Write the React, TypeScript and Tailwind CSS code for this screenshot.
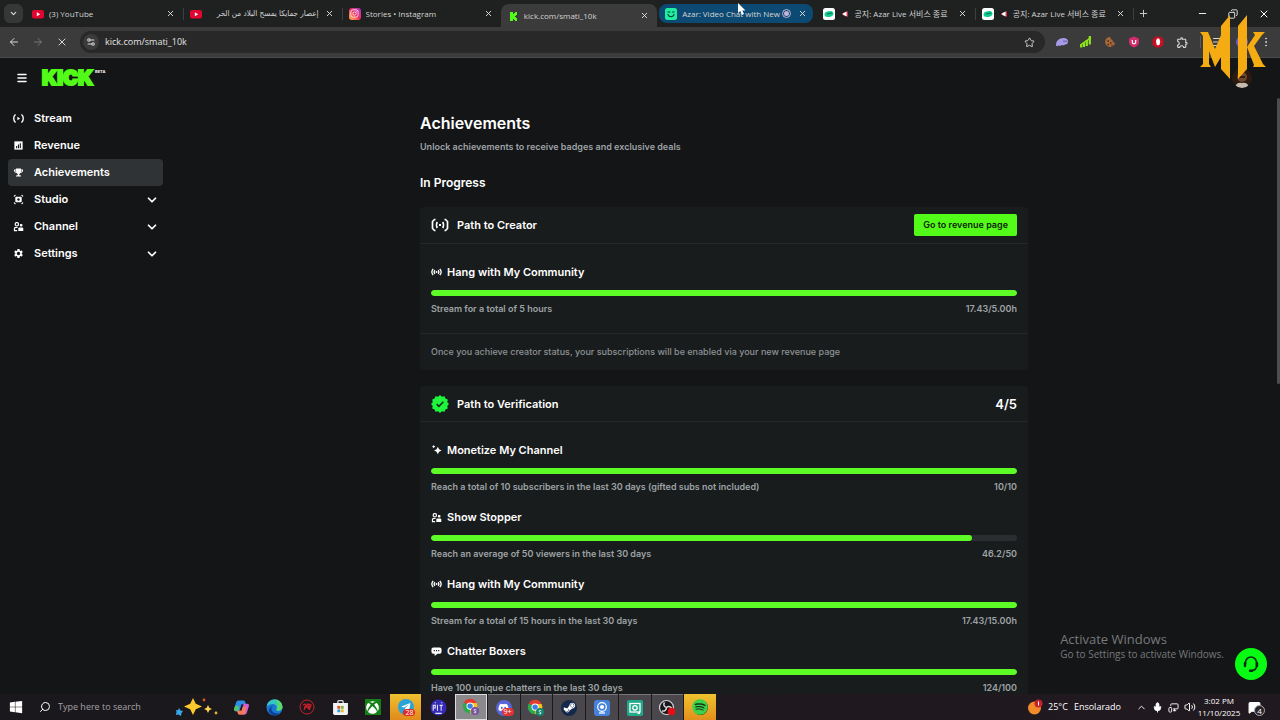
import type { ReactNode } from "react";
import {
  ArrowLeft,
  ArrowRight,
  ChevronDown,
  ChevronUp,
  Copy,
  ListMusic,
  Menu,
  MessageSquareText,
  Mic,
  Minus,
  MonitorSmartphone,
  MoreVertical,
  Plus,
  Search,
  Settings2,
  Star,
  Volume2,
  X,
} from "lucide-react";
import { FaDiscord, FaInstagram, FaSpotify, FaSteamSymbol, FaTelegramPlane, FaTrophy, FaWindows, FaXbox } from "react-icons/fa";
import { MdOutlineExtension, MdSettings } from "react-icons/md";

type Tab = {
  title: string;
  icon: ReactNode;
  state?: "active" | "recording";
  rtl?: boolean;
  horn?: boolean;
  divider?: boolean;
};

type Goal = {
  title: string;
  icon: ReactNode;
  caption: string;
  value: string;
  percent: number;
};

/* ---------- small drawings ---------- */

const YoutubeIcon = () => (
  <svg viewBox="0 0 12 12" className="size-3 shrink-0">
    <rect x="0" y="2" width="12" height="8.4" rx="2" fill="#e0062f" />
    <path d="M4.8 4.2v4l3.4-2z" fill="#fff" />
  </svg>
);

const InstagramIcon = () => (
  <span className="flex size-3 shrink-0 items-center justify-center rounded-[3px] bg-linear-to-tr from-[#fdb43c] via-[#f0255f] to-[#a02bd0] text-white">
    <FaInstagram size={9} />
  </span>
);

const KickIcon = () => (
  <svg viewBox="0 0 12 12" className="size-3 shrink-0" fill="#53fc18">
    <path d="M3 2h3v2h1V3h1V2h2v3H9v1H8v1h1v1h1v3H8v-1H7V9H6v2H3z" />
  </svg>
);

const AzarIcon = () => (
  <svg viewBox="0 0 12 12" className="size-3 shrink-0">
    <rect width="12" height="12" rx="2.5" fill="#1ff0a0" />
    <path d="M3 4h2M7.5 4H9M3 6.5c1 3 5 3 6 0" fill="none" stroke="#0b3b38" strokeWidth="1.2" strokeLinecap="round" />
  </svg>
);

const AzarNoticeIcon = () => (
  <svg viewBox="0 0 12 12" className="size-3 shrink-0">
    <rect width="12" height="12" rx="2.5" fill="#fff" />
    <path d="M1.5 6.5C2 3 5 3.500 7 3c2-.3 3.500.6 3.500 2.500S9 8.500 6.500 9C4 9 1.500 9 1.500 6.500z" fill="#13c98e" />
    <path d="M4 6l5-1" stroke="#0a6d60" strokeWidth="1" />
  </svg>
);

const HornIcon = () => (
  <svg viewBox="0 0 10 10" className="size-2 shrink-0">
    <path d="M1 4l5-2v6L1 6z" fill="#fff" />
    <path d="M6 2l1.500-.5v7L6 8zM0 4h1.500v2.300H0z" fill="#d92638" />
  </svg>
);

const BroadcastIcon = ({ className }: { className: string }) => (
  <svg viewBox="0 0 16 12" className={className} fill="none" stroke="currentColor" strokeWidth="2">
    <circle cx="8" cy="6" r="1.500" fill="currentColor" stroke="none" />
    <path d="M5.500 3.200c-1.200 1.600-1.200 4 0 5.600M10.500 3.200c1.200 1.600 1.200 4 0 5.600M3 1.200c-2.300 2.800-2.300 6.800 0 9.600M13 1.200c2.300 2.800 2.300 6.800 0 9.600" />
  </svg>
);

const CreatorIcon = () => (
  <svg viewBox="0 0 18 14" className="h-[14px] w-[18px] text-white" fill="none" stroke="currentColor" strokeWidth="1.700">
    <rect x="8" y="6" width="2" height="2" fill="currentColor" stroke="none" />
    <path d="M4.500 1.500H3.500L1.500 3.500v7l2 2h1M13.500 1.500h1l2 2v7l-2 2h-1M6.300 4c-1 1.500-1 4.500 0 6M11.700 4c1 1.500 1 4.500 0 6" />
  </svg>
);

const StreamIcon = () => (
  <svg viewBox="0 0 12 12" className="size-[11px]" fill="none" stroke="currentColor" strokeWidth="1.500">
    <path d="M3 2H2.500Q.8 3.500.8 6T2.500 10H3M9 2h.5q1.700 1.500 1.700 4T9.500 10H9" />
    <path d="M4.800 4v4l3-2z" fill="currentColor" stroke="none" />
  </svg>
);

const RevenueIcon = () => (
  <svg viewBox="0 0 12 12" className="size-[11px]">
    <rect x="1.500" y="1.500" width="9" height="9" fill="currentColor" />
    <path d="M4 9V6.500M6 9V5M8 9V3.500" stroke="#141517" strokeWidth="1.200" />
  </svg>
);

const StudioIcon = () => (
  <svg viewBox="0 0 12 12" className="size-[11px]">
    <path d="M1.500 3v-1.500h1.500M9 1.500h1.500v1.500M10.500 9v1.500H9M3 10.500H1.500V9" fill="none" stroke="currentColor" strokeWidth="1" />
    <rect x="2.500" y="3" width="7" height="6" rx="1" fill="currentColor" />
    <circle cx="6" cy="6" r="1.300" fill="#141517" />
  </svg>
);

const PeopleIcon = () => (
  <svg viewBox="0 0 12 12" className="size-[11px]">
    <rect x="2.500" y="1.800" width="3.400" height="3.400" rx="1.200" fill="none" stroke="currentColor" strokeWidth="1.300" />
    <path d="M1.600 10.500V8.200q0-1.200 1.400-1.200h2M1 10.400h3.500" fill="none" stroke="currentColor" strokeWidth="1.300" />
    <rect x="7.500" y="3.200" width="2.800" height="2.800" rx="1" fill="currentColor" />
    <path d="M5.800 11V8.200q0-1.200 1.200-1.200h3q1.200 0 1.200 1.200V11z" fill="currentColor" />
  </svg>
);

const SparkIcon = () => (
  <svg viewBox="0 0 12 12" className="size-[10px]" fill="currentColor">
    <path d="M7 2l1.500 3L11.500 6.500 8.500 8 7 11 5.500 8 2.500 6.500l3-1.500z" />
    <path d="M2 0l.8 1.200L4 2l-1.200.8L2 4l-.8-1.200L0 2l1.200-.8z" />
  </svg>
);

const ChatIcon = () => (
  <svg viewBox="0 0 12 12" className="size-[11px]">
    <path d="M2.500 1.500h7Q11.500 1.500 11.500 3.500v3q0 2-2 2H7L4 11V8.500H2.500q-2 0-2-2v-3q0-2 2-2z" fill="currentColor" />
    <path d="M3 5h1.200M5.400 5h1.200M7.800 5H9" stroke="#191b1c" strokeWidth="1.200" />
  </svg>
);

const VerifiedIcon = () => (
  <svg viewBox="0 0 24 24" className="size-[18px]">
    <path
      d="M12 0l2.500 2.300L18 1.600l1.200 3.200L22.400 6l-.7 3.500L24 12l-2.300 2.500.7 3.500-3.200 1.200L18 22.400l-3.500-.7L12 24l-2.500-2.300-3.500.7-1.200-3.200L1.600 18l.7-3.500L0 12l2.300-2.500L1.600 6l3.200-1.200L6 1.600l3.500.7z"
      fill="#1ff53f"
    />
    <path d="M7.500 12.200l3 2.800 6-6" fill="none" stroke="#12321a" strokeWidth="2.200" />
  </svg>
);

const HeadsetIcon = () => (
  <svg viewBox="0 0 18 18" className="size-[18px]" fill="none" stroke="currentColor">
    <path d="M3.500 9V7.500a5.500 5.500 0 0111 0V11q0 4-4.500 4.500" strokeWidth="1.700" />
    <path d="M3 8v3M15 8v3" strokeWidth="2.400" strokeLinecap="round" />
    <path d="M8 15.700h2.200" strokeWidth="2.400" strokeLinecap="round" />
  </svg>
);

const ChromeIcon = ({ badge }: { badge: "purple" | "green" }) => (
  <svg viewBox="0 0 20 20" className="size-[18px]">
    <path d="M9 9L2 5a8 8 0 0114 0z" fill="#e33b2e" />
    <path d="M9 9h7.800A8 8 0 019 17z" fill="#fbc116" />
    <path d="M9 9l0 8A8 8 0 012 5z" fill="#2da94f" />
    <path d="M9 5.500h7.200A8 8 0 0110 17l2.500-6z" fill="#fbc116" />
    <circle cx="9" cy="9" r="4" fill="#fff" />
    <circle cx="9" cy="9" r="3" fill="#3e7fe8" />
    <circle cx="14.500" cy="14.500" r="4.500" fill={badge === "purple" ? "#74529f" : "#10866a"} />
    <path d="M16 13.200q-1.500-1-2.500-.2-.8 1 .8 1.500 2 .5 1.200 1.700-1 .8-2.500-.2" fill="none" stroke="#e8e3f5" strokeWidth="1" />
  </svg>
);

const CopilotIcon = () => (
  <svg viewBox="0 0 16 16" className="size-[17px]">
    <path d="M5 1.500h5q1 0 1.400 1.200L12 5H8L6 11.500H2.500Q.5 11.500 1 9.500L3 3q.5-1.500 2-1.500z" fill="#2a8fe6" />
    <path d="M1 9.500L2 6l4 1-1 4.500H2.500Q.6 11.500 1 9.500z" fill="#54c36a" />
    <path d="M11 14.500H6q-1 0-1.400-1.200L4 11h4l2-6.500h3.500q2 0 1.500 2L13 13q-.5 1.500-2 1.500z" fill="#d45bd0" />
    <path d="M4.600 13.300L4 11h4.200l1-3.500h3.300L11 14.500H6q-1 0-1.400-1.200z" fill="#f57a55" />
  </svg>
);

const EdgeIcon = () => (
  <svg viewBox="0 0 16 16" className="size-[17px]">
    <circle cx="8" cy="8" r="7.500" fill="#1979d2" />
    <path d="M.5 8A7.500 7.500 0 0115.500 7.500c0 2.500-2 3.500-4 3.500-1.500 0-2.200-.5-1.500-1.300C11 7 9 4.800 6.500 4.800 3.500 4.800 1 6 .5 8z" fill="#35c6c4" />
    <path d="M9 .7c4 .4 6.500 3.500 6.500 6.800 0 2.500-2 3.500-4 3.500-1.500 0-2-.5-1.500-1.300C11.500 6 11 3 9 .7z" fill="#5bd86a" />
    <path d="M5 9c.2 3.500 3.500 5.500 8 4-2.500 3-7 3-9.500 0C2 11 3 7 7 6.500 5.500 7 5 8 5 9z" fill="#0c3f95" />
  </svg>
);

const StoreIcon = () => (
  <svg viewBox="0 0 16 16" className="size-[17px]">
    <path d="M5.500 4V2.500q0-1 1-1h3q1 0 1 1V4" fill="none" stroke="#d8dde0" strokeWidth="1.200" />
    <path d="M1 3.800h14v9.700q0 1.500-1.500 1.500h-11Q1 15 1 13.500z" fill="#f1f3f4" />
    <path d="M5 6.500h2.700v2.700H5z" fill="#e8502f" />
    <path d="M8.300 6.500H11v2.700H8.300z" fill="#7db72f" />
    <path d="M5 9.800h2.700v2.700H5z" fill="#2b9fe6" />
    <path d="M8.300 9.800H11v2.700H8.300z" fill="#f3b61f" />
  </svg>
);

const ObsIcon = () => (
  <svg viewBox="0 0 18 18" className="size-[18px]">
    <circle cx="8.500" cy="8.500" r="7" fill="#17171a" stroke="#d5d5d8" strokeWidth="1.200" />
    <path d="M8.500 8.500C6 8 5 5.500 6.500 3.500M8.500 8.500c2-1.500 4.500-1 5.500 1M8.500 8.500c0 2.500-2 4-4.500 3.500" fill="none" stroke="#d5d5d8" strokeWidth="1.500" />
    <circle cx="13.500" cy="12.500" r="3.800" fill="#e80c14" />
  </svg>
);

const SparklesWidget = () => (
  <svg viewBox="0 0 42 18" className="h-[18px] w-[42px] shrink-0">
    <path d="M17 0l2.800 5.700L26 8.500l-6.200 2.800L17 17l-2.800-5.700L8 8.500l6.200-2.800z" fill="#fdc92c" />
    <path d="M32 7l1.300 2.700L36 11l-2.700 1.300L32 15l-1.300-2.700L28 11l2.700-1.300z" fill="#fbd34f" />
    <path d="M3 10l1.500 2.500L7 13l-1.500 2L5 18l-2.500-1.500L0 17l.5-3L0 12l2 .3z" fill="#38a7ec" />
    <circle cx="28" cy="2" r="1.400" fill="#d9572e" />
    <circle cx="40" cy="15" r="1.400" fill="#e0b33a" />
  </svg>
);

const Emblem = () => (
  <svg viewBox="0 0 66 66" className="pointer-events-none absolute top-[15px] right-[14px] z-20 size-[66px]" fill="#f5ab12">
    <path d="M21 11l9-11v64l-9-10z" />
    <path d="M38 11l9-11v54l-9 10z" />
    <path d="M0 17h8l7 17 6-14v22l-6 10-6-16v13l2 3H0l3-3V21z" />
    <path d="M47 32l8-12-2-3h12l-3 3-8 11 9 18 3 3H53l1-2z" />
  </svg>
);

/* ---------- data ---------- */

const tabs: Tab[] = [
  { title: "(3) YouTube", icon: <YoutubeIcon />, divider: true },
  { title: "إعصار جمايكا يمسح البلاد من الخر", icon: <YoutubeIcon />, rtl: true, divider: true },
  { title: "Stories • Instagram", icon: <InstagramIcon /> },
  { title: "kick.com/smati_10k", icon: <KickIcon />, state: "active" },
  { title: "Azar: Video Chat with New", icon: <AzarIcon />, state: "recording" },
  { title: "공지: Azar Live 서비스 종료", icon: <AzarNoticeIcon />, horn: true, divider: true },
  { title: "공지: Azar Live 서비스 종료", icon: <AzarNoticeIcon />, horn: true, divider: true },
];

const navItems = [
  { label: "Stream", icon: <StreamIcon /> },
  { label: "Revenue", icon: <RevenueIcon /> },
  { label: "Achievements", icon: <FaTrophy size={9} />, active: true },
  { label: "Studio", icon: <StudioIcon />, nested: true },
  { label: "Channel", icon: <PeopleIcon />, nested: true },
  { label: "Settings", icon: <MdSettings size={11} />, nested: true },
];

const creatorGoals: Goal[] = [
  {
    title: "Hang with My Community",
    icon: <BroadcastIcon className="h-2 w-[11px]" />,
    caption: "Stream for a total of 5 hours",
    value: "17.43/5.00h",
    percent: 100,
  },
];

const verificationGoals: Goal[] = [
  {
    title: "Monetize My Channel",
    icon: <SparkIcon />,
    caption: "Reach a total of 10 subscribers in the last 30 days (gifted subs not included)",
    value: "10/10",
    percent: 100,
  },
  {
    title: "Show Stopper",
    icon: <PeopleIcon />,
    caption: "Reach an average of 50 viewers in the last 30 days",
    value: "46.2/50",
    percent: 92.4,
  },
  {
    title: "Hang with My Community",
    icon: <BroadcastIcon className="h-2 w-[11px]" />,
    caption: "Stream for a total of 15 hours in the last 30 days",
    value: "17.43/15.00h",
    percent: 100,
  },
  {
    title: "Chatter Boxers",
    icon: <ChatIcon />,
    caption: "Have 100 unique chatters in the last 30 days",
    value: "124/100",
    percent: 100,
  },
];

/* ---------- browser ---------- */

function BrowserTab({ tab }: { tab: Tab }) {
  const look =
    tab.state === "active"
      ? "h-[23px] rounded-t-lg bg-[#3b3b3b] mr-0.5 pr-2"
      : tab.state === "recording"
        ? "h-[19px] rounded-lg bg-[#0c4a73] mr-1 pr-1.5"
        : "h-[19px] pr-2";
  return (
    <div className="flex h-[27px] min-w-0 pt-1">
      <div className={`flex min-w-0 flex-1 items-center pl-1.5 ${look}`}>
        {tab.icon}
        {tab.horn && (
          <span className="ml-[7px] flex">
            <HornIcon />
          </span>
        )}
        <button
          dir={tab.rtl ? "rtl" : "ltr"}
          className={`min-w-0 flex-1 overflow-hidden text-start text-[8px] leading-4 whitespace-nowrap text-[#d4d4d4] ${
            tab.horn ? "ml-1" : "ml-[5px]"
          } ${tab.rtl ? "mr-1.5 font-['DejaVu_Sans_Condensed','DejaVu_Sans',sans-serif]" : ""}`}
        >
          {tab.title}
        </button>
        {tab.state === "recording" && (
          <span className="mr-[7px] flex size-[9px] shrink-0 items-center justify-center rounded-full border border-[#c3b4d8]">
            <span className="size-[5px] rounded-full bg-[#c3b4d8]" />
          </span>
        )}
        <button aria-label="Close tab" className="text-[#dedede]">
          <X size={9} strokeWidth={2.5} />
        </button>
      </div>
      {tab.divider && <span className="mt-1 h-3 w-px bg-[#3d3f40]" />}
    </div>
  );
}

function TabStrip() {
  return (
    <div className="flex h-[27px] items-center bg-[#1f2121]">
      <button
        aria-label="Search tabs"
        className="mr-[3px] ml-1 flex size-[19px] items-center justify-center rounded-md bg-[#363737] text-[#dedede]"
      >
        <ChevronDown size={9} strokeWidth={3} />
      </button>
      <div className="grid max-w-[1108px] flex-1 grid-cols-7">
        {tabs.map((tab, i) => (
          <BrowserTab key={i} tab={tab} />
        ))}
      </div>
      <button aria-label="New tab" className="ml-1 text-[#d4d4d4]">
        <Plus size={11} />
      </button>
      <div className="ml-auto flex items-center gap-5 pr-2.5 text-white">
        <button aria-label="Minimize">
          <Minus size={11} strokeWidth={2} />
        </button>
        <button aria-label="Restore">
          <Copy size={10} strokeWidth={2} className="-scale-x-100" />
        </button>
        <button aria-label="Close">
          <X size={12} strokeWidth={2} />
        </button>
      </div>
    </div>
  );
}

function Toolbar() {
  return (
    <div className="flex h-[31px] items-center border-b border-[#4a4a4a] bg-[#3b3b3b] text-[#d8d8d8]">
      <div className="flex items-center gap-3 pl-2">
        <button aria-label="Back">
          <ArrowLeft size={12} />
        </button>
        <button aria-label="Forward" className="text-[#777]">
          <ArrowRight size={12} />
        </button>
        <button aria-label="Stop loading">
          <X size={12} />
        </button>
      </div>
      <div className="ml-3 flex h-[22px] flex-1 items-center rounded-full bg-[#282828] pr-2.5 pl-[3px]">
        <button aria-label="Site information" className="flex size-4 items-center justify-center rounded-full bg-[#3b3b3b]">
          <Settings2 size={10} strokeWidth={2.5} />
        </button>
        <input
          aria-label="Address"
          defaultValue="kick.com/smati_10k"
          className="ml-1.5 min-w-0 flex-1 bg-transparent text-[9px] leading-4 text-[#e3e3e3] outline-none"
        />
        <button aria-label="Bookmark this page">
          <Star size={11} />
        </button>
      </div>
      <div className="flex items-center gap-3 pr-2 pl-[11px]">
        <button aria-label="Phantom">
          <svg viewBox="0 0 12 12" className="size-3">
            <path d="M0 9c0-4 3-7 7.500-7C10.500 2 12 3.500 12 5.500S10.500 9 9 8.500C7.500 10 6 9 5.500 9 4.500 10.500 3 9.500 2.500 9.500 1.500 10.500 0 10.500 0 9z" fill="#a79ae9" />
            <path d="M8 4.500v1.500M10 4.500V6" stroke="#4b4084" strokeWidth="1" />
          </svg>
        </button>
        <button aria-label="Stats">
          <svg viewBox="0 0 12 12" className="size-3" fill="none" stroke="#8fe51c" strokeWidth="2.200">
            <path d="M1.200 8.500v3M4 6.500V11M6.800 4v6M9.800 0v8.500" />
            <path d="M0 9.500L11 1.500" strokeWidth="1.500" />
          </svg>
        </button>
        <button aria-label="Cookies">
          <svg viewBox="0 0 12 12" className="size-3">
            <path d="M6.500 1a5 5 0 104.500 6L9 6l-.5-2L6.500 3z" fill="#a7673b" />
            <path d="M3.500 5h1.500M6 7h1.500M3.500 8.500H5M7.500 9.500h1" stroke="#472617" strokeWidth="1.300" />
          </svg>
        </button>
        <button aria-label="Shield">
          <svg viewBox="0 0 12 12" className="size-3">
            <path d="M6 .5l5 2v4Q10.500 10 6 11.500 1.500 10 1 6.500v-4z" fill="#d12c6c" />
            <path d="M4.300 4v2.300q0 1.500 1.700 1.500t1.700-1.500V4" fill="none" stroke="#fff" strokeWidth="1.200" />
          </svg>
        </button>
        <button aria-label="Ad blocker">
          <svg viewBox="0 0 12 12" className="size-3">
            <path d="M3.500.5h5l3 3v5l-3 3h-5l-3-3v-5z" fill="#c50f24" />
            <path d="M4 5l.8-2L6 2.200 7.500 3l.7 2.500-.5 3-1.700 1-1.500-1z" fill="#fff" />
          </svg>
        </button>
        <button aria-label="Extensions">
          <MdOutlineExtension size={13} />
        </button>
        <span className="-mx-px h-3 w-px bg-[#585858]" />
        <button aria-label="Media controls">
          <ListMusic size={12} />
        </button>
        <button aria-label="Profile" className="size-3 rounded-full bg-[#7a5cc0] text-[9px] leading-3 text-white">
          S
        </button>
        <button aria-label="Browser menu">
          <MoreVertical size={12} strokeWidth={2} />
        </button>
      </div>
    </div>
  );
}

/* ---------- page ---------- */

function SiteHeader() {
  return (
    <header className="flex h-10 shrink-0 items-center pr-7 pl-4">
      <button aria-label="Toggle menu" className="text-white">
        <Menu size={12} strokeWidth={3} />
      </button>
      <a href="#" aria-label="Kick home" className="ml-3 flex text-[#53fc18]">
        <svg viewBox="0 0 68 24" className="h-6 w-[68px]">
          <text
            x="2"
            y="19"
            fill="currentColor"
            stroke="currentColor"
            strokeWidth="2"
            strokeLinejoin="miter"
            fontFamily="Inter, sans-serif"
            fontWeight="900"
            fontSize="20"
          >
            KICK
          </text>
          <text x="55" y="7" fill="#fff" fontFamily="Inter, sans-serif" fontWeight="700" fontSize="4">
            BETA
          </text>
        </svg>
      </a>
      <button aria-label="Account" className="ml-auto size-5 overflow-hidden rounded-full">
        <svg viewBox="0 0 20 20">
          <rect width="20" height="20" fill="#2b1a10" />
          <circle cx="10" cy="9" r="5" fill="#70452c" />
          <path d="M3 20q1-6 7-5 6-1 7 5z" fill="#c6bdb0" />
          <path d="M7 9h6" stroke="#1a0f0a" strokeWidth="1.500" />
        </svg>
      </button>
    </header>
  );
}

function Sidebar() {
  return (
    <nav className="w-[171px] shrink-0 px-2 pt-[7px]">
      {navItems.map((item) => (
        <a
          key={item.label}
          href="#"
          className={`flex h-[27px] items-center rounded-sm pr-1 pl-[5px] text-[11px] font-semibold text-white ${
            item.active ? "bg-[#303335]" : ""
          }`}
        >
          <span className="mr-2.5 flex w-[11px] justify-center">{item.icon}</span>
          {item.label}
          {item.nested && <ChevronDown size={14} strokeWidth={3} className="ml-auto" />}
        </a>
      ))}
    </nav>
  );
}

function GoalRow({ goal }: { goal: Goal }) {
  return (
    <div>
      <h4 className="flex items-center gap-[5px] text-[11px] leading-4 font-semibold text-white">
        <span className="flex w-[11px] justify-center">{goal.icon}</span>
        {goal.title}
      </h4>
      <div
        role="progressbar"
        aria-label={goal.title}
        aria-valuenow={goal.percent}
        className="mt-2.5 h-1.5 overflow-hidden rounded-full bg-[#2b2e31]"
      >
        <div className="h-full rounded-full bg-[#5dfc26]" style={{ width: `${goal.percent}%` }} />
      </div>
      <div className="mt-[5px] flex justify-between text-[9px] leading-4 font-semibold text-[#9ea3a6]">
        <span>{goal.caption}</span>
        <span>{goal.value}</span>
      </div>
    </div>
  );
}

function AchievementCard({
  icon,
  title,
  aside,
  goals,
  footer,
}: {
  icon: ReactNode;
  title: string;
  aside: ReactNode;
  goals: Goal[];
  footer?: string;
}) {
  return (
    <section className="mt-4 rounded-sm bg-[#191c1d]">
      <div className="flex min-h-9 items-center border-b border-[#24282a] px-[11px]">
        <span className="mr-2 flex w-[18px] justify-center">{icon}</span>
        <h3 className="text-[11px] leading-4 font-semibold text-white">{title}</h3>
        <div className="ml-auto">{aside}</div>
      </div>
      <div className="flex flex-col gap-3.5 px-[11px] pt-5 pb-4">
        {goals.map((goal, i) => (
          <GoalRow key={i} goal={goal} />
        ))}
      </div>
      {footer && (
        <p className="border-t border-[#24282a] px-[11px] py-2.5 text-[9px] leading-4 font-medium text-[#8d9295]">
          {footer}
        </p>
      )}
    </section>
  );
}

function Achievements() {
  return (
    <main className="relative min-w-0 flex-1 overflow-hidden pr-[3px]">
      <div className="mx-auto max-w-[608px] pt-[15px]">
        <h1 className="text-base leading-5 font-semibold text-white">Achievements</h1>
        <p className="mt-1.5 text-[9px] leading-4 font-semibold text-[#9ea3a6]">
          Unlock achievements to receive badges and exclusive deals
        </p>
        <h2 className="mt-5 text-xs leading-4 font-semibold text-white">In Progress</h2>
        <AchievementCard
          icon={<CreatorIcon />}
          title="Path to Creator"
          aside={
            <button className="my-[7px] flex h-[22px] items-center rounded-xs bg-[#53fc18] px-[9px] text-[9px] leading-4 font-semibold text-[#10250a]">
              Go to revenue page
            </button>
          }
          goals={creatorGoals}
          footer="Once you achieve creator status, your subscriptions will be enabled via your new revenue page"
        />
        <AchievementCard
          icon={<VerifiedIcon />}
          title="Path to Verification"
          aside={<span className="block text-[13px] leading-4 font-semibold text-white">4/5</span>}
          goals={verificationGoals}
        />
      </div>
      {/* Scrollbar */}
      <div className="absolute top-0 right-0 h-[286px] w-[3px] rounded-full bg-[#4b4e50]" />
    </main>
  );
}

/* ---------- taskbar ---------- */

const taskCell = "flex h-[26px] items-center justify-center";
const openCell = "flex h-[26px] items-center justify-center bg-[#49474c] border-t border-[#77757a]";

function Taskbar() {
  return (
    <footer className="flex h-[26px] shrink-0 items-center bg-linear-to-r from-[#1a181c] to-[#211920] text-white">
      <button aria-label="Start" className="ml-[9px]">
        <FaWindows size={14} />
      </button>
      <label className="ml-4 flex items-center">
        <Search size={12} className="-scale-x-100" />
        <input
          placeholder="Type here to search"
          aria-label="Type here to search"
          className="ml-[7px] w-[118px] bg-transparent text-[9px] leading-4 outline-none placeholder:text-[#a5a2a5]"
        />
      </label>
      <SparklesWidget />
      <div className="ml-2 grid w-[490px] shrink-0 grid-cols-15 gap-px">
        <button aria-label="Copilot" className={taskCell}>
          <CopilotIcon />
        </button>
        <button aria-label="Edge" className={taskCell}>
          <EdgeIcon />
        </button>
        <button aria-label="Game launcher" className={taskCell}>
          <svg viewBox="0 0 16 16" className="size-4" fill="none" stroke="#c91f2b">
            <circle cx="8" cy="8" r="7" strokeWidth="1" />
            <path d="M4 6l2-1 1 2-2 4M7 7l2-2 1 2-1 3M10 5l2 1-1 3-1 2M5 8h6" strokeWidth="1.300" />
          </svg>
        </button>
        <button aria-label="Store" className={taskCell}>
          <StoreIcon />
        </button>
        <button aria-label="Xbox" className={taskCell}>
          <span className="flex size-4 items-center justify-center bg-[#138016]">
            <FaXbox size={13} />
          </span>
        </button>
        <button aria-label="Telegram" className="relative flex h-[26px] items-center justify-center bg-linear-to-b from-[#eec12f] to-[#e08a1c]">
          <span className="flex size-4 items-center justify-center rounded-full bg-[#2ba3d8]">
            <FaTelegramPlane size={10} />
          </span>
          <span className="absolute right-1.5 bottom-1 rounded-full bg-[#dd2a22] px-0.5 text-[7px] leading-[7px]">28</span>
        </button>
        <button aria-label="Play" className={taskCell}>
          <svg viewBox="0 0 16 16" className="size-[17px]">
            <circle cx="8" cy="8" r="7.500" fill="#362bb4" />
            <path d="M3 11V6h2v2.500H3M7 5.500V11M9 6h3M10.500 6v5M4.500 3.500h1M10.500 3.500h1M5 13.500h6" fill="none" stroke="#e4e1ff" strokeWidth="1" />
          </svg>
        </button>
        <button aria-label="Chrome" className="flex h-[26px] items-center justify-center border border-[#dcdcdc] bg-[#8a898b]">
          <ChromeIcon badge="purple" />
        </button>
        <button aria-label="Discord" className={`relative ${openCell}`}>
          <span className="flex size-4 items-center justify-center rounded-full bg-[#5865d8]">
            <FaDiscord size={11} />
          </span>
          <span className="absolute right-1.5 bottom-1 rounded-full bg-[#dd3438] px-0.5 text-[7px] leading-[8px]">9+</span>
        </button>
        <button aria-label="Chrome profile" className={openCell}>
          <ChromeIcon badge="green" />
        </button>
        <button aria-label="Steam" className={openCell}>
          <span className="flex size-4 items-center justify-center rounded-full bg-[#14284a]">
            <FaSteamSymbol size={13} />
          </span>
        </button>
        <button aria-label="Webcam" className={openCell}>
          <svg viewBox="0 0 16 16" className="size-4">
            <rect width="16" height="16" rx="3" fill="#4482dc" />
            <circle cx="8" cy="7" r="4.300" fill="none" stroke="#fff" strokeWidth="1.200" />
            <circle cx="8" cy="7" r="2" fill="#fff" />
            <path d="M5 13h6" stroke="#fff" strokeWidth="1.300" />
          </svg>
        </button>
        <button aria-label="Camera recorder" className={openCell}>
          <svg viewBox="0 0 16 16" className="size-4">
            <rect width="16" height="16" rx="2" fill="#22a98c" />
            <rect x="3" y="3.500" width="10" height="8.500" fill="none" stroke="#fff" strokeWidth="1.300" />
            <circle cx="8" cy="7.800" r="2.200" fill="none" stroke="#fff" strokeWidth="1.300" />
            <path d="M10 14l3-3v3z" fill="#fff" />
          </svg>
        </button>
        <button aria-label="OBS" className={openCell}>
          <ObsIcon />
        </button>
        <button aria-label="Spotify" className="flex h-[26px] items-center justify-center bg-linear-to-b from-[#efc32e] to-[#e28f1d]">
          <span className="flex size-[15px] items-center justify-center rounded-full bg-[#123a18] text-[#3fd14c]">
            <FaSpotify size={16} className="shrink-0" />
          </span>
        </button>
      </div>

      {/* Tray */}
      <div className="ml-auto flex shrink-0 items-center pr-[19px] text-[9px] leading-3">
        <button className="flex items-center">
          <svg viewBox="0 0 16 16" className="mr-[5px] size-4">
            <circle cx="7.500" cy="9" r="6.500" fill="#f28a2a" />
            <circle cx="11.500" cy="4.500" r="4" fill="#c3222b" />
            <path d="M11.500 2.500v4" stroke="#fff" strokeWidth="1" />
          </svg>
          <span>25°C</span>
          <span className="ml-1.5">Ensolarado</span>
        </button>
        <div className="ml-[15px] flex items-center gap-[5px]">
          <button aria-label="Show hidden icons">
            <ChevronUp size={11} />
          </button>
          <button aria-label="Microphone">
            <Mic size={11} fill="currentColor" />
          </button>
          <button aria-label="Network">
            <MonitorSmartphone size={11} className="-scale-x-100" />
          </button>
          <button aria-label="Volume">
            <Volume2 size={12} />
          </button>
        </div>
        <button className="ml-px w-11 text-center text-[8px] leading-3 whitespace-nowrap">
          3:02 PM
          <br />
          11/10/2025
        </button>
        <button aria-label="Notifications" className="relative ml-[7px]">
          <MessageSquareText size={13} fill="#fff" stroke="#fff" />
          <span className="absolute top-1 left-1.5 flex size-[11px] items-center justify-center rounded-full border border-[#aaa] bg-[#2a2429] text-[8px] leading-[9px]">
            4
          </span>
        </button>
      </div>
    </footer>
  );
}

export default function App() {
  return (
    <div className="relative flex h-screen flex-col overflow-hidden bg-[#141517] font-['Open_Sans','Noto_Sans','Noto_Sans_CJK_KR',sans-serif]">
      <TabStrip />
      <Toolbar />
      <div className="relative flex min-h-0 flex-1 flex-col font-[Inter,sans-serif]">
        <SiteHeader />
        <div className="flex min-h-0 flex-1">
          <Sidebar />
          <Achievements />
        </div>
        <button
          aria-label="Support"
          className="absolute right-[13px] bottom-3.5 flex size-8 items-center justify-center rounded-full bg-[#08fb12] text-[#0a2a0c]"
        >
          <HeadsetIcon />
        </button>
      </div>
      <Taskbar />

      {/* Activation watermark */}
      <div className="pointer-events-none absolute right-14 bottom-[59px] text-[#77797a]">
        <p className="text-[13px] leading-4">Activate Windows</p>
        <p className="text-[10px] leading-[14px]">Go to Settings to activate Windows.</p>
      </div>

      <Emblem />

      {/* Pointer */}
      <svg viewBox="0 0 8 12" className="pointer-events-none absolute top-[3px] left-[738px] h-3 w-2">
        <path d="M0 0v10l2.300-2L4 12l2-1-1.700-3.500H7.500z" fill="#fff" />
      </svg>
    </div>
  );
}
